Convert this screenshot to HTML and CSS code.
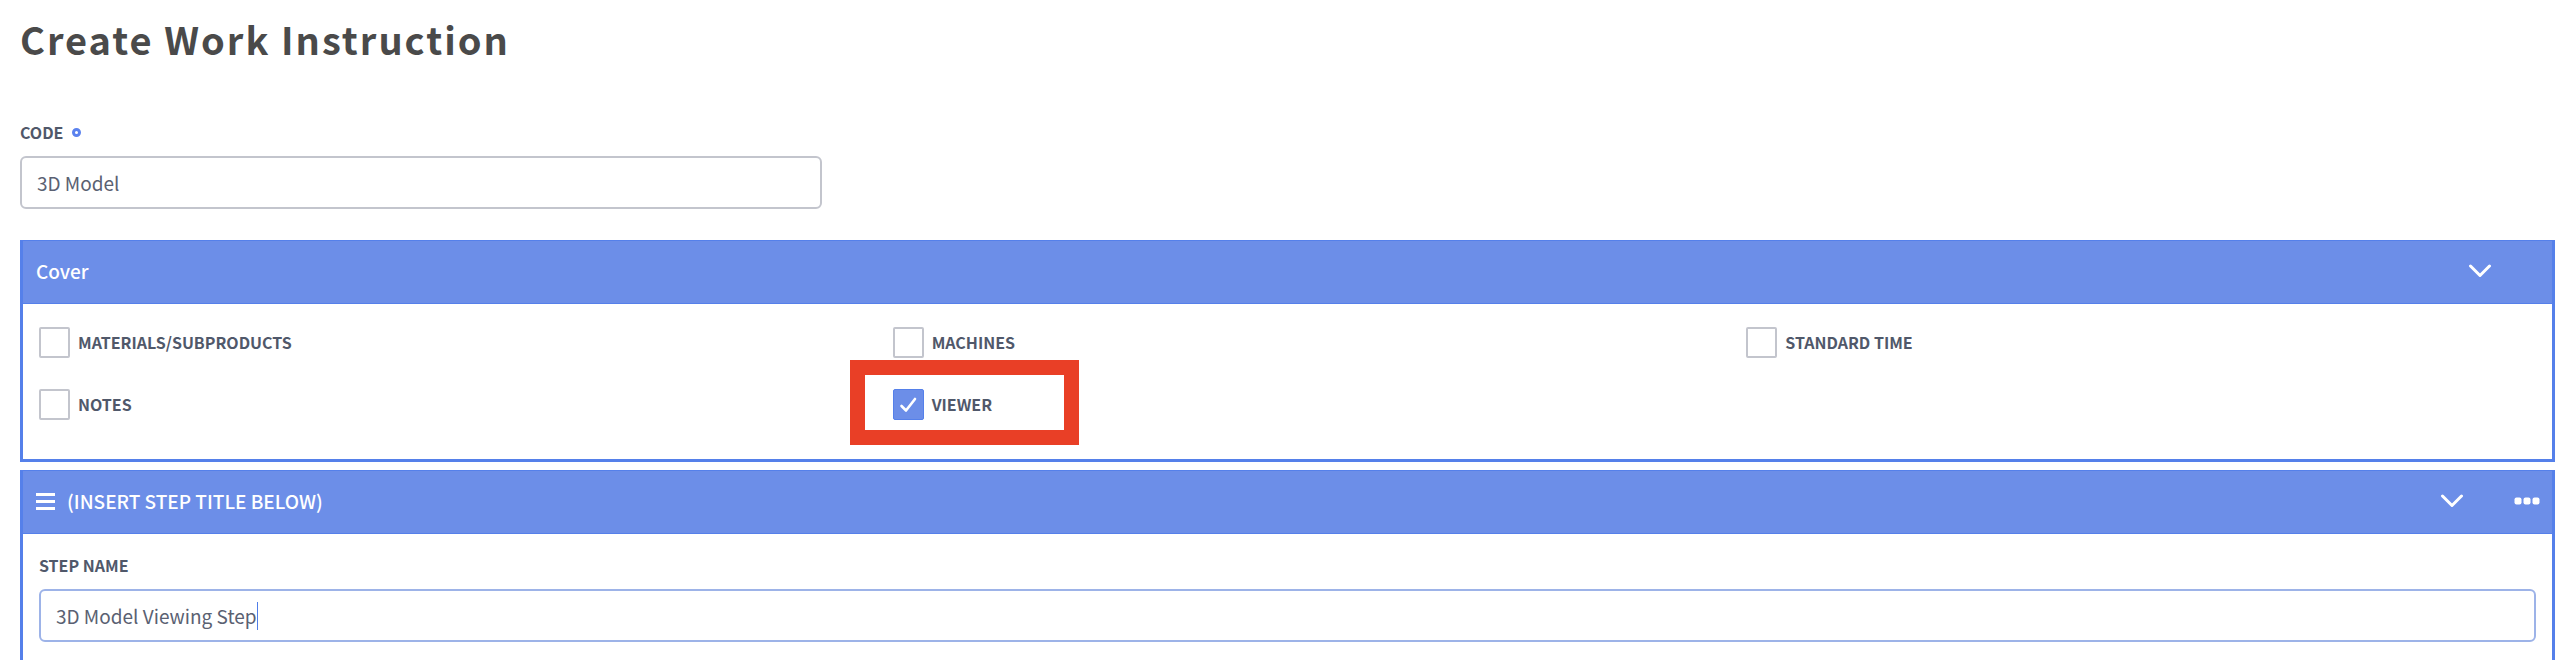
FILE: index.html
```html
<!DOCTYPE html>
<html lang="en">
<head>
<meta charset="utf-8">
<title>Create Work Instruction</title>
<link rel="stylesheet" href="styles.css">
</head>
<body>
<main class="page">
  <h1 class="title">Create Work Instruction</h1>
  <form class="form">
    <div class="columns">
      <div class="field">
        <label class="label" for="code">CODE <span class="required"></span></label>
        <input class="input" id="code" type="text" value="3D Model">
      </div>
    </div>

    <section class="panel cover">
      <header class="panel-head">
        <h2 class="panel-title">Cover</h2>
        <button class="icon-button" type="button" aria-label="Collapse cover">
          <svg width="24" height="14" viewBox="0 0 24 14"><path d="M2.500 2l9.500 9.500L21.500 2" fill="none" stroke="currentColor" stroke-width="3" stroke-linecap="round" stroke-linejoin="round"/></svg>
        </button>
      </header>
      <div class="panel-body columns options">
        <label class="option"><input class="check" type="checkbox">MATERIALS/SUBPRODUCTS</label>
        <label class="option"><input class="check" type="checkbox">MACHINES</label>
        <label class="option"><input class="check" type="checkbox">STANDARD TIME</label>
        <label class="option"><input class="check" type="checkbox">NOTES</label>
        <div class="marked">
          <label class="option"><input class="check" type="checkbox" checked>
            <svg class="tick" width="31" height="31" viewBox="0 0 31 31"><path d="M8.500 17l4.500 4.500L22 10" fill="none" stroke="currentColor" stroke-width="2.600" stroke-linecap="round" stroke-linejoin="round"/></svg>VIEWER</label>
          <span class="highlight"></span>
        </div>
      </div>
    </section>

    <section class="panel step">
      <header class="panel-head">
        <svg class="grip" width="19" height="17" viewBox="0 0 19 17"><path d="M0 1.500h19M0 8.500h19M0 15.500h19" stroke="currentColor" stroke-width="3"/></svg>
        <h2 class="panel-title">(INSERT STEP TITLE BELOW)</h2>
        <button class="icon-button" type="button" aria-label="Collapse step">
          <svg width="24" height="14" viewBox="0 0 24 14"><path d="M2.500 2l9.500 9.500L21.500 2" fill="none" stroke="currentColor" stroke-width="3" stroke-linecap="round" stroke-linejoin="round"/></svg>
        </button>
        <button class="icon-button more" type="button" aria-label="More actions">
          <svg width="26" height="8" viewBox="0 0 26 8" fill="currentColor"><rect x="0.500" y="0.500" width="7" height="7" rx="2"/><rect x="9.500" y="0.500" width="7" height="7" rx="2"/><rect x="18.500" y="0.500" width="7" height="7" rx="2"/></svg>
        </button>
      </header>
      <div class="panel-body field">
        <label class="label" for="step-name">STEP NAME</label>
        <div class="input focused">
          <input class="bare" id="step-name" type="text" value="3D Model Viewing Step">
          <span class="caret"></span>
        </div>
      </div>
    </section>
  </form>
</main>
</body>
</html>
```
FILE: styles.css
```css
* { box-sizing: border-box; }

body {
  margin: 0;
  background: #fff;
  color: #50586a;
  font-family: "Noto Sans CJK JP", "Noto Sans", sans-serif;
  font-size: 19px;
}

.page { padding: 13px 7px 0 20px; }

.title {
  margin: 0;
  color: #4a4a4a;
  font-size: 38px;
  line-height: 52px;
  font-weight: 700;
  letter-spacing: 2px;
}

.form { padding-top: 55px; }

.columns {
  display: grid;
  grid-template-columns: repeat(3, 1fr);
  column-gap: 64px;
}

.field {
  display: flex;
  flex-direction: column;
  gap: 12px;
}

.label {
  display: flex;
  align-items: center;
  gap: 9px;
  font-size: 16px;
  line-height: 24px;
  font-weight: 700;
}

.required {
  width: 9px;
  height: 9px;
  border: 3px solid #5b82ee;
  border-radius: 50%;
}

.input {
  width: 100%;
  height: 53px;
  padding: 0 15px;
  border: 2px solid #c3c5cd;
  border-radius: 6px;
  background: #fff;
  color: #5a6172;
  font: inherit;
  outline: none;
}

.focused {
  display: flex;
  align-items: center;
  border: 2px solid #9db3e8;
}

.bare {
  field-sizing: content;
  padding: 0;
  border: 0;
  background: none;
  color: inherit;
  font: inherit;
  outline: none;
}

.caret {
  width: 1px;
  height: 28px;
  background: #4f7de8;
}

.panel {
  border: 3px solid #5580ea;
  border-top-width: 1px;
}

.cover { margin-top: 31px; }

.step {
  margin-top: 8px;
  border-bottom: 0;
}

.panel-head {
  display: flex;
  align-items: center;
  height: 63px;
  padding: 0 12px 2px 13px;
  border-bottom: 1px solid #5580ea;
  background: #6c8ee8;
  color: #fff;
}

.panel-title {
  flex: 1;
  margin: 0;
  font-size: 19px;
  line-height: 28px;
  font-weight: 500;
}

.grip { margin-right: 12px; }

.icon-button {
  display: flex;
  padding: 0;
  border: 0;
  background: none;
  color: inherit;
}

.cover .icon-button { margin-right: 48px; }

.more { margin-left: 50px; }

.panel-body { padding: 19px 16px 18px; }

.options {
  row-gap: 31px;
  padding: 23px 16px 39px;
}

.option {
  position: relative;
  display: flex;
  align-items: center;
  gap: 8px;
  font-size: 16px;
  line-height: 31px;
  font-weight: 700;
}

.check {
  appearance: none;
  width: 31px;
  height: 31px;
  margin: 0;
  border: 2px solid #c3c5cd;
  border-radius: 2px;
  background: #fff;
}

.check:checked {
  border: 1px solid #5580ea;
  background: #6c8ee8;
}

.tick {
  position: absolute;
  left: 0;
  top: 0;
  color: #fff;
}

.marked { position: relative; }

.highlight {
  position: absolute;
  left: -43px;
  top: -29px;
  width: 229px;
  height: 85px;
  border: 15px solid #e93f26;
  pointer-events: none;
}
```
